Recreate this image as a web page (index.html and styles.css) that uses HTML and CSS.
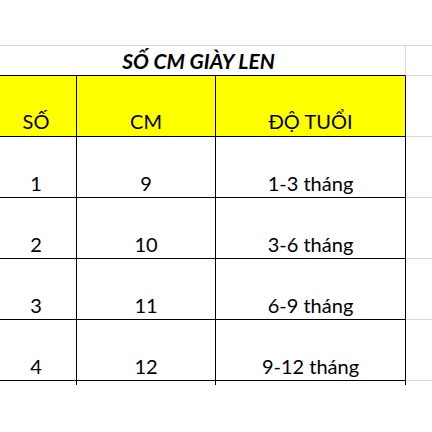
FILE: index.html
```html
<!DOCTYPE html>
<html lang="vi">
<head>
<meta charset="utf-8">
<title>Số cm giày len</title>
<link rel="stylesheet" href="styles.css">
</head>
<body>
<div class="sheet">
  <div class="top"></div>
  <div class="grid">
    <div class="cell title">SỐ CM GIÀY LEN</div>
    <div class="cell side first"></div>

    <div class="cell head">SỐ</div>
    <div class="cell head">CM</div>
    <div class="cell head">ĐỘ TUỔI</div>
    <div class="cell side"></div>

    <div class="cell">1</div>
    <div class="cell">9</div>
    <div class="cell">1-3 tháng</div>
    <div class="cell side"></div>

    <div class="cell">2</div>
    <div class="cell">10</div>
    <div class="cell">3-6 tháng</div>
    <div class="cell side"></div>

    <div class="cell">3</div>
    <div class="cell">11</div>
    <div class="cell">6-9 tháng</div>
    <div class="cell side"></div>

    <div class="cell">4</div>
    <div class="cell">12</div>
    <div class="cell">9-12 tháng</div>
    <div class="cell side"></div>

    <div class="stub"></div>
    <div class="stub"></div>
    <div class="stub"></div>
    <div class="stub none"></div>
  </div>
</div>
</body>
</html>
```
FILE: styles.css
```css
html, body {
  margin: 0;
  padding: 0;
  background: #ffffff;
}
body {
  width: 432px;
  height: 432px;
  overflow: hidden;
  font-family: Lato, "Open Sans", sans-serif;
  color: #000000;
}
.sheet {
  margin-left: -4px;
}
.top {
  height: 45px;
  border-bottom: 1px solid #d9d9d9;
}
.grid {
  display: grid;
  grid-template-columns: 81px 139px 190px 30px;
  grid-template-rows: 30px repeat(5, 61px) 4px;
}
.cell {
  box-sizing: border-box;
  border-right: 1px solid #000;
  border-bottom: 1px solid #000;
  display: flex;
  align-items: flex-end;
  justify-content: center;
  font-size: 20px;
  line-height: 1;
  padding-bottom: 4px;
}
.title {
  grid-column: 1 / span 3;
  border-right: 1px solid #d9d9d9;
  font-weight: bold;
  font-style: italic;
  font-size: 21px;
  padding-bottom: 4px;
  padding-right: 4px;
}
.head {
  background: #ffff00;
  padding-bottom: 5px;
}
.side {
  border-right: none;
  border-bottom: 1px solid #d9d9d9;
}
.first {
  border-bottom-color: #d9d9d9;
}
.stub {
  border-right: 1px solid #000;
}
.stub.none {
  border-right: none;
}
```
